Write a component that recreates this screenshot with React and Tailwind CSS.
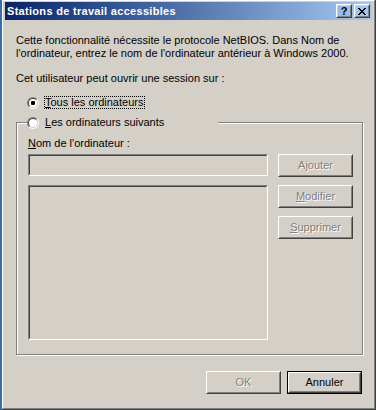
import React from "react";

const FONT = "font-['Liberation_Sans',Arial,sans-serif]";

function Raised({ className = "", innerClass = "", children }) {
  return (
    <div className={`flex box-border border [border-color:#fff_#404040_#404040_#fff] ${className}`}>
      <div className={`flex flex-1 items-center justify-center border [border-color:#d4d0c8_#808080_#808080_#d4d0c8] ${innerClass}`}>
        {children}
      </div>
    </div>
  );
}

function Sunken({ className = "" }) {
  return (
    <div className={`flex box-border border [border-color:#808080_#fff_#fff_#808080] ${className}`}>
      <div className="flex-1 border [border-color:#404040_#d4d0c8_#d4d0c8_#404040] bg-[#d4d0c8]" />
    </div>
  );
}

function Disabled({ children }) {
  return <span className="text-[#808080] [text-shadow:1px_1px_0_#fff]">{children}</span>;
}

function PushButton({ children }) {
  return (
    <Raised className="w-[75px] h-[23px]">
      <span className="text-[11px] leading-[13px]">{children}</span>
    </Raised>
  );
}

function Radio({ checked }) {
  return (
    <span className="flex box-border w-[12px] h-[12px] shrink-0 rounded-full border [border-color:#808080_#fff_#fff_#808080]">
      <span className="flex flex-1 items-center justify-center rounded-full border [border-color:#404040_#d4d0c8_#d4d0c8_#404040] bg-white">
        {checked && <span className="w-[4px] h-[4px] rounded-[1px] bg-black" />}
      </span>
    </span>
  );
}

function CloseGlyph() {
  return (
    <svg width="8" height="7" viewBox="0 0 8 7" shapeRendering="crispEdges">
      <path
        fill="#000"
        d="M0 0h2v1H0zM6 0h2v1H6zM1 1h2v1H1zM5 1h2v1H5zM2 2h4v1H2zM3 3h2v1H3zM2 4h4v1H2zM1 5h2v1H1zM5 5h2v1H5zM0 6h2v1H0zM6 6h2v1H6z"
      />
    </svg>
  );
}

export default function App() {
  return (
    <div className={`flex w-[376px] h-[410px] bg-[#3a6ea5] pl-[2px] ${FONT} text-black`}>
      <div className="flex flex-1 border-r border-b border-[#404040]">
        <div className="flex flex-1 flex-col border [border-color:#fff_#808080_#808080_#fff] bg-[#d4d0c8] pt-[1px] pl-[2px] pr-[2px] pb-[2px]">
          {/* Title bar */}
          <div className="flex h-[18px] items-center bg-linear-to-r from-[#0a246a] to-[#a6caf0] pl-[2px] pr-[2px]">
            <span className="flex-1 text-[11px] font-bold leading-[13px] tracking-[0.3px] text-white">
              Stations de travail accessibles
            </span>
            <Raised className="w-[16px] h-[14px]">
              <span className="text-[11px] font-bold leading-[11px] text-black">?</span>
            </Raised>
            <Raised className="ml-[2px] w-[16px] h-[14px]">
              <CloseGlyph />
            </Raised>
          </div>

          {/* Body */}
          <div className="flex flex-1 flex-col pl-[11px] pt-[14px] text-[11px] leading-[13px]">
            <p>
              Cette fonctionnalité nécessite le protocole NetBIOS. Dans Nom de
              <br />
              l'ordinateur, entrez le nom de l'ordinateur antérieur à Windows 2000.
            </p>
            <p className="mt-[12px]">Cet utilisateur peut ouvrir une session sur :</p>

            <div className="mt-[11px] ml-[11px] flex h-[13px] items-center">
              <Radio checked />
              <span className="ml-[5px] border border-dotted border-black pr-[1px] leading-[11px]">
                <span className="underline underline-offset-[1px]">T</span>ous les ordinateurs
              </span>
            </div>

            <fieldset className="mt-[7px] w-[347px] border border-[#808080] shadow-[inset_1px_1px_0_#fff,1px_1px_0_#fff] pl-[11px] pb-[14px]">
              <legend className="-ml-[1px] w-[191px] bg-[#d4d0c8]">
                <div className="flex h-[13px] items-center">
                  <Radio />
                  <span className="ml-[6px]">
                    <span className="underline underline-offset-[1px]">L</span>es ordinateurs suivants
                  </span>
                </div>
              </legend>

              <div className="mt-[8px] h-[13px]">
                <span className="underline underline-offset-[1px]">N</span>om de l'ordinateur :
              </div>

              <div className="mt-[4px] flex gap-[10px]">
                <div className="flex w-[240px] flex-col">
                  <Sunken className="h-[22px]" />
                  <Sunken className="mt-[9px] h-[155px]" />
                </div>
                <div className="flex flex-col gap-[8px]">
                  <PushButton>
                    <Disabled>
                      A<span className="underline underline-offset-[1px]">j</span>outer
                    </Disabled>
                  </PushButton>
                  <PushButton>
                    <Disabled>
                      <span className="underline underline-offset-[1px]">M</span>odifier
                    </Disabled>
                  </PushButton>
                  <PushButton>
                    <Disabled>
                      <span className="underline underline-offset-[1px]">S</span>upprimer
                    </Disabled>
                  </PushButton>
                </div>
              </div>
            </fieldset>

            <div className="mt-[16px] flex justify-end gap-[6px] pr-[10px]">
              <PushButton>
                <Disabled>OK</Disabled>
              </PushButton>
              <div className="flex border border-black">
                <Raised className="w-[73px] h-[21px]">
                  <span className="text-[11px] leading-[13px]">Annuler</span>
                </Raised>
              </div>
            </div>
          </div>
        </div>
      </div>
    </div>
  );
}
